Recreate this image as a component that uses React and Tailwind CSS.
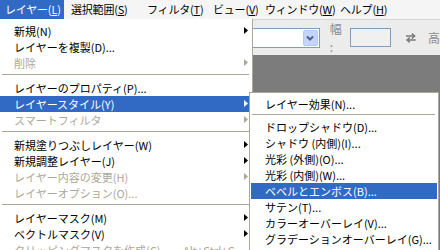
import React from "react";

const FONT = { fontFamily: '"Noto Sans CJK JP", "Noto Sans", sans-serif' };

function Arrow({ color }) {
  return (
    <svg width="4" height="7" viewBox="0 0 4 7" className="absolute right-[1px] top-[4px]">
      <polygon points="0,0 4,3.5 0,7" fill={color} />
    </svg>
  );
}

function Row({ label, disabled, active, arrow, accel }) {
  const color = active ? "text-white" : disabled ? "text-[#aca899]" : "text-black";
  const arrowColor = active ? "#ffffff" : disabled ? "#aca899" : "#000000";
  return (
    <div className={`relative h-[16px] flex items-center pl-[14px] whitespace-nowrap text-[11px] leading-[16px] ${color} ${active ? "bg-[#316ac5]" : ""}`}>
      <span>{label}</span>
      {accel && <span className="absolute left-[183px] top-0">{accel}</span>}
      {arrow && <Arrow color={arrowColor} />}
    </div>
  );
}

function Sep() {
  return (
    <div className="h-[9px] pt-[3px] pl-[2px]">
      <div className="h-px bg-[#aca899]" />
    </div>
  );
}

function SubSep() {
  return (
    <div className="h-[7px] pt-[2px] pl-[1px] pr-[2px]">
      <div className="h-px bg-[#aca899]" />
    </div>
  );
}

export default function App() {
  return (
    <div className="relative w-[440px] h-[250px] overflow-hidden bg-[#7c7c7c]" style={FONT}>
      {/* Menu bar */}
      <div className="h-[19px] flex items-stretch bg-[#f5f5f5] text-[11px] tracking-[-0.2px] whitespace-nowrap">
        <div className="flex-none w-[64px] pl-[5px] flex items-center bg-[#316ac5] text-white">
          レイヤー(<span className="underline">L</span>)
        </div>
        <div className="flex-none w-[76px] pl-[7px] flex items-center">
          選択範囲(<span className="underline">S</span>)
        </div>
        <div className="flex-none w-[66px] pl-[7px] flex items-center">
          フィルタ(<span className="underline">T</span>)
        </div>
        <div className="flex-none w-[52px] pl-[7px] flex items-center">
          ビュー(<span className="underline">V</span>)
        </div>
        <div className="flex-none w-[75px] pl-[7px] flex items-center">
          ウィンドウ(<span className="underline">W</span>)
        </div>
        <div className="flex-none pl-[7px] flex items-center">
          ヘルプ(<span className="underline">H</span>)
        </div>
      </div>

      {/* Options toolbar */}
      <div className="h-[36px] flex items-center bg-[#ececec] border-t border-[#d6d6d6]">
        <div className="ml-[200px] w-[123px] h-[20px] border border-[#7f9db9] bg-white flex justify-end items-stretch p-px">
          <div className="w-[15px] bg-[#c4d4fb] border border-[#b5c8f5] rounded-[2px] flex items-center justify-center">
            <svg width="8" height="6" viewBox="0 0 8 6">
              <polyline points="1,1.5 4,4.5 7,1.5" fill="none" stroke="#4d6185" strokeWidth="2" />
            </svg>
          </div>
        </div>
        <div className="ml-[10px] text-[12px] text-[#8c8c8c]">幅 :</div>
        <div className="ml-[3px] w-[42px] h-[19px] border border-[#7f9db9] bg-[#f0f0f0]" />
        <svg className="ml-[14px]" width="12" height="10" viewBox="0 0 12 10">
          <path d="M1 3H10M7 0.5L10 3L7 5.5" fill="none" stroke="#7a7a7a" strokeWidth="1.4" />
          <path d="M11 7H2M5 4.5L2 7L5 9.5" fill="none" stroke="#7a7a7a" strokeWidth="1.4" />
        </svg>
        <div className="ml-[11px] text-[12px] text-[#8c8c8c]">高</div>
      </div>

      {/* Layer menu dropdown */}
      <div className="absolute left-0 top-[19px] w-[253px] h-[240px] bg-white border-r border-[#aca899] pt-[4px] pr-[3px]">
        <Row label="新規(N)" arrow />
        <Row label="レイヤーを複製(D)..." />
        <Row label="削除" disabled arrow />
        <Sep />
        <Row label="レイヤーのプロパティ(P)..." />
        <Row label="レイヤースタイル(Y)" active arrow />
        <Row label="スマートフィルタ" disabled arrow />
        <Sep />
        <Row label="新規塗りつぶしレイヤー(W)" arrow />
        <Row label="新規調整レイヤー(J)" arrow />
        <Row label="レイヤー内容の変更(H)" disabled arrow />
        <Row label="レイヤーオプション(O)..." disabled />
        <Sep />
        <Row label="レイヤーマスク(M)" arrow />
        <Row label="ベクトルマスク(V)" arrow />
        <Row label="クリッピングマスクを作成(C)" disabled accel="Alt+Ctrl+G" />
      </div>

      {/* Layer style submenu */}
      <div className="absolute left-[249px] top-[92px] w-[190px] h-[180px] bg-white border border-[#aca899] pt-[3px] px-px">
        <Row label="レイヤー効果(N)..." />
        <SubSep />
        <Row label="ドロップシャドウ(D)..." />
        <Row label="シャドウ (内側)(I)..." />
        <Row label="光彩 (外側)(O)..." />
        <Row label="光彩 (内側)(W)..." />
        <Row label="ベベルとエンボス(B)..." active />
        <Row label="サテン(T)..." />
        <Row label="カラーオーバーレイ(V)..." />
        <Row label="グラデーションオーバーレイ(G)..." />
      </div>
    </div>
  );
}
